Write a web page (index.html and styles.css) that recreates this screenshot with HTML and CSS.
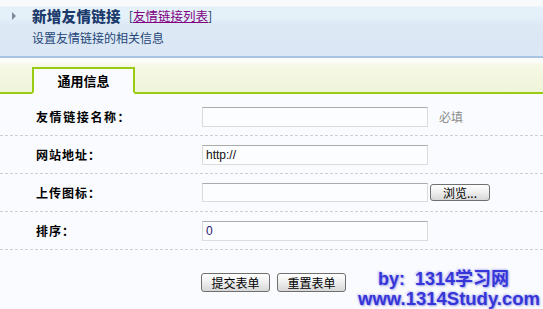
FILE: index.html
```html
<!DOCTYPE html>
<html>
<head>
	<meta charset="UTF-8">
	<title>新增友情链接</title>
	<link rel="stylesheet" href="styles.css">
</head>
<body>

<!-- ****************** HEADER ****************** -->
<div class="header">
	<div class="headline">
		<span class="arrow"></span>
		<span class="title">新增友情链接</span>
		<span class="sublink">[<a href="#">友情链接列表</a>]</span>
	</div>
	<div class="subtitle">设置友情链接的相关信息</div>
</div>

<!-- ****************** TABS ****************** -->
<div class="tabbar">
	<div class="tab">通用信息</div>
</div>

<!-- ****************** FORM ****************** -->
<div class="main">
	<div class="formrows">
		<div class="row">
			<div class="label wide">友情链接名称：</div>
			<div class="field"><input class="text" type="text" value=""><span class="hint">必填</span></div>
		</div>
		<div class="row">
			<div class="label">网站地址：</div>
			<div class="field"><input class="text" type="text" value="http://"></div>
		</div>
		<div class="row">
			<div class="label">上传图标：</div>
			<div class="field"><span class="filebox"></span><button class="btn browse">浏览...</button></div>
		</div>
		<div class="row">
			<div class="label short">排序：</div>
			<div class="field"><input class="text num" type="text" value="0"></div>
		</div>
	</div>

	<div class="buttons">
		<button class="btn">提交表单</button>
		<button class="btn">重置表单</button>
	</div>

	<div class="watermark">
		<div class="wm1">by:&nbsp; 1314学习网</div>
		<div class="wm2">www.1314Study.com</div>
	</div>
</div>

</body>
</html>
```

FILE: styles.css
```css
	html, body { margin: 0; padding: 0; height: 100%; }
	body { font-family: "Noto Sans CJK SC", "Liberation Sans", sans-serif; font-size: 12px; background-color: #f9fbfe; color: #000; overflow: hidden;
		display: flex; flex-direction: column; }

	.header { height: 56px; flex: none; border-bottom: 2px solid #a9c5e3;
		background: linear-gradient(#f7f9fa 0, #f7f9fa 6px, #e5f1f9 7px, #e5f1f9 17px, #dce9f5 25px, #dbe7f4 100%); }
	.headline { display: flex; align-items: center; height: 20px; padding: 6px 0 0 12px; }
	.arrow { width: 0; height: 0; border-left: 4px solid #7d8a9c; border-top: 4px solid transparent; border-bottom: 4px solid transparent; margin-right: 16px; }
	.title { font-size: 14.5px; font-weight: 900; color: #1c3b6c; line-height: 20px; letter-spacing: 0.3px; }
	.sublink { margin-left: 8px; font-size: 12.5px; color: #1c3b6c; line-height: 20px; }
	.sublink a { color: #800080; text-decoration: underline; }
	.subtitle { padding-left: 32px; margin-top: 5px; line-height: 14px; color: #1f4677; }

	.tabbar { height: 34px; flex: none; display: flex; align-items: flex-end; padding-left: 32px;
		border-bottom: 2px solid #99cc11;
		background: linear-gradient(#fcfdfb 0, #fcfdf8 4px, #f5f9e5 7px, #eff4da 100%); }
	.tab { width: 99px; height: 23px; margin-bottom: -2px; line-height: 23px; text-align: center;
		font-size: 13px; font-weight: bold; background-color: #f9fbfe;
		border: 2px solid #99cc11; border-bottom: 2px solid #f9fbfe; }

	.main { position: relative; flex: 1; padding-top: 4px; }
	.row { display: flex; align-items: center; height: 37px; border-bottom: 1px dashed #cfcfcf; }
	.label { width: 166px; padding-left: 36px; font-weight: bold; letter-spacing: 1px; }
	.label.wide { letter-spacing: 1.6px; }
	.field { display: flex; align-items: center; }
	.text { box-sizing: border-box; width: 226px; height: 20px; padding: 0 3px; margin: 0;
		border: 1px solid #dcdcdc; border-top-color: #ababab; background-color: #fcfdfe;
		font-family: "Liberation Sans", sans-serif; font-size: 12px; color: #111; }
	.text.num { color: #2a1670; }
	.hint { margin-left: 11px; color: #8a8a8a; }
	.filebox { box-sizing: border-box; width: 226px; height: 19px; border: 1px solid #dcdcdc; border-top-color: #ababab; background-color: #fcfdfe; }

	.btn { box-sizing: border-box; height: 19px; padding: 0 6px; margin: 0;
		font-family: "Noto Sans CJK SC", sans-serif; font-size: 12px; line-height: 15px; color: #000;
		border: 1px solid #6f6f6f; border-radius: 3px; cursor: pointer;
		background: linear-gradient(#ffffff, #f2f2f2 40%, #d7d7d7); }
	.browse { width: 60px; height: 17px; margin-left: 2px; letter-spacing: 0; }

	.buttons { display: flex; gap: 7px; padding: 23px 0 0 201px; }
	.buttons .btn { width: 69px; }

	.watermark { position: absolute; right: 3px; bottom: 0; text-align: right;
		font-family: "Liberation Sans", "Noto Sans CJK SC", sans-serif; font-weight: bold; color: #3535d8;
		text-shadow: 1px 1px 2px #a0a0e8, -1px -1px 2px #c8c8f4; }
	.wm1 { font-size: 18px; line-height: 19px; margin-right: 31px; }
	.wm2 { font-size: 18.5px; line-height: 20px; }
```
